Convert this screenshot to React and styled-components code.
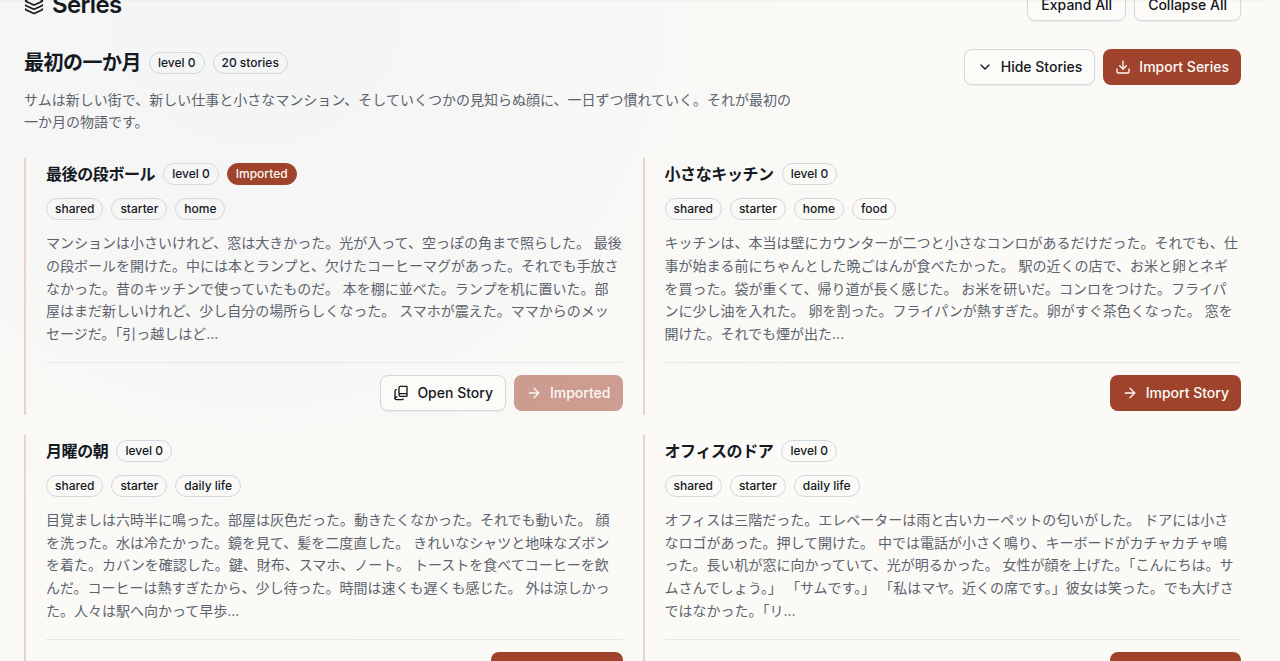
import React from "react";
import styled, { createGlobalStyle, css } from "styled-components";
import { ArrowRight, BookCopy, ChevronDown, Download, Layers } from "lucide-react";

const GlobalStyle = createGlobalStyle`
  *,
  *::before,
  *::after {
    box-sizing: border-box;
  }

  html {
    height: 100%;
    overflow: hidden;
    background: #fbfaf6;
  }

  body {
    margin: 0;
    height: 100%;
    color: #14181f;
    font-family: Inter, "Noto Sans CJK JP", sans-serif;
    font-size: 14px;
    line-height: 20px;
    background: radial-gradient(
      ellipse 52% 100% at 20% 0%,
      #f3f4f5 0%,
      #fbfaf6 100%
    ) no-repeat;
  }
`;

const TopEdge = styled.div`
  position: fixed;
  top: -1px;
  left: 0;
  right: 15px;
  height: 1px;
  box-shadow: 0 1px 2px rgba(20, 24, 31, 0.05);
`;

const Page = styled.main`
  display: flex;
  flex-direction: column;
  gap: 28px;
  margin-top: -11px;
  padding: 0 39px 24px 24px;
`;

const Bar = styled.header`
  display: flex;
  align-items: ${(props) => props.$align || "center"};
  justify-content: space-between;
  gap: 16px;
`;

const PageTitle = styled.h1`
  display: flex;
  align-items: center;
  gap: 8px;
  margin: 0;
  font-size: 24px;
  font-weight: 600;
  line-height: 32px;
  letter-spacing: -0.025em;
`;

const Actions = styled.div`
  display: flex;
  flex-shrink: 0;
  justify-content: flex-end;
  gap: 8px;
`;

const Button = styled.button`
  display: inline-flex;
  align-items: center;
  justify-content: center;
  gap: 8px;
  height: ${(props) => (props.$small ? "32px" : "36px")};
  padding: 0 ${(props) => (props.$small ? "13px" : "12px")};
  border: 0;
  border-radius: 8px;
  font: inherit;
  font-weight: 500;
  white-space: nowrap;
  cursor: pointer;
  color: #fbfaf6;
  background: #a0432d;

  &:disabled {
    opacity: 0.5;
    cursor: default;
  }

  ${(props) =>
    props.$outline &&
    css`
      color: #14181f;
      background: #fcfbf8;
      border: 1px solid #d3d7de;
      box-shadow: 0 1px 2px rgba(20, 24, 31, 0.06);
    `}
`;

const Series = styled.section`
  display: flex;
  flex-direction: column;
  gap: 25px;
`;

const SeriesInfo = styled.div`
  display: flex;
  flex-direction: column;
  gap: 12px;
  max-width: 768px;
`;

const Row = styled.div`
  display: flex;
  flex-wrap: wrap;
  align-items: center;
  gap: 8px;
`;

const SeriesTitle = styled.h2`
  margin: 0;
  font-size: 20px;
  font-weight: 600;
  line-height: 28px;
  letter-spacing: -0.025em;
`;

const StoryTitle = styled.h3`
  margin: 0;
  font-size: 16px;
  font-weight: 600;
  line-height: 24px;
  letter-spacing: -0.025em;
`;

const Badge = styled.span`
  display: inline-flex;
  align-items: center;
  height: 22px;
  padding: 0 8px;
  border: 1px solid ${(props) => (props.$filled ? "#a0432d" : "#d3d7de")};
  border-radius: 11px;
  color: ${(props) => (props.$filled ? "#fbfaf6" : "#14181f")};
  background: ${(props) => (props.$filled ? "#a0432d" : "transparent")};
  font-size: 12px;
  font-weight: 500;
  line-height: 16px;
`;

const SeriesText = styled.p`
  margin: 0;
  color: #5c636e;
  line-height: 22px;
`;

const StoryText = styled(SeriesText)`
  line-height: 1.625;
  white-space: pre-line;
`;

const StoryGrid = styled.div`
  display: grid;
  grid-template-columns: repeat(2, minmax(0, 1fr));
  gap: 20px;
`;

const Story = styled.article`
  display: flex;
  flex-direction: column;
  gap: 12px;
  padding: 4px 0 4px 20px;
  border-left: 2px solid #e8d2cc;
`;

const StoryFooter = styled.footer`
  display: flex;
  justify-content: flex-end;
  gap: 8px;
  margin-top: 4px;
  padding-top: 12px;
  border-top: 1px solid #e5e7e9;
`;

const stories = [
  {
    title: "最後の段ボール",
    tags: ["shared", "starter", "home"],
    imported: true,
    text: "マンションは小さいけれど、窓は大きかった。光が入って、空っぽの角まで照らした。 最後の段ボールを開けた。中には本とランプと、欠けたコーヒーマグがあった。それでも手放さなかった。昔のキッチンで使っていたものだ。 本を棚に並べた。ランプを机に置いた。部\n屋はまだ新しいけれど、少し自分の場所らしくなった。 スマホが震えた。ママからのメッ\nセージだ。「引っ越しはど...",
  },
  {
    title: "小さなキッチン",
    tags: ["shared", "starter", "home", "food"],
    text: "キッチンは、本当は壁にカウンターが二つと小さなコンロがあるだけだった。それでも、仕事が始まる前にちゃんとした晩ごはんが食べたかった。 駅の近くの店で、お米と卵とネギを買った。袋が重くて、帰り道が長く感じた。 お米を研いだ。コンロをつけた。フライパンに少し油を入れた。 卵を割った。フライパンが熱すぎた。卵がすぐ茶色くなった。 窓を開けた。それでも煙が出た...",
  },
  {
    title: "月曜の朝",
    tags: ["shared", "starter", "daily life"],
    text: "目覚ましは六時半に鳴った。部屋は灰色だった。動きたくなかった。それでも動いた。 顔を洗った。水は冷たかった。鏡を見て、髪を二度直した。 きれいなシャツと地味なズボンを着た。カバンを確認した。鍵、財布、スマホ、ノート。 トーストを食べてコーヒーを飲んだ。コーヒーは熱すぎたから、少し待った。時間は速くも遅くも感じた。 外は涼しかった。人々は駅へ向かって早歩...",
  },
  {
    title: "オフィスのドア",
    tags: ["shared", "starter", "daily life"],
    text: "オフィスは三階だった。エレベーターは雨と古いカーペットの匂いがした。 ドアには小さなロゴがあった。押して開けた。 中では電話が小さく鳴り、キーボードがカチャカチャ鳴った。長い机が窓に向かっていて、光が明るかった。 女性が顔を上げた。「こんにちは。サムさんでしょう。」 「サムです。」 「私はマヤ。近くの席です。」彼女は笑った。でも大げさではなかった。「リ...",
  },
];

function StoryCard({ story }) {
  return (
    <Story>
      <Row>
        <StoryTitle>{story.title}</StoryTitle>
        <Badge>level 0</Badge>
        {story.imported && <Badge $filled>Imported</Badge>}
      </Row>
      <Row>
        {story.tags.map((tag) => (
          <Badge key={tag}>{tag}</Badge>
        ))}
      </Row>
      <StoryText>{story.text}</StoryText>
      <StoryFooter>
        {story.imported && (
          <Button $outline>
            <BookCopy size={16} />
            Open Story
          </Button>
        )}
        <Button disabled={story.imported}>
          <ArrowRight size={16} />
          {story.imported ? "Imported" : "Import Story"}
        </Button>
      </StoryFooter>
    </Story>
  );
}

function App() {
  return (
    <>
      <GlobalStyle />
      <TopEdge />
      <Page>
        <Bar>
          <PageTitle>
            <Layers size={20} />
            Series
          </PageTitle>
          <Actions>
            <Button $outline $small>
              Expand All
            </Button>
            <Button $outline $small>
              Collapse All
            </Button>
          </Actions>
        </Bar>
        <Series>
          <Bar $align="flex-start">
            <SeriesInfo>
              <Row>
                <SeriesTitle>最初の一か月</SeriesTitle>
                <Badge>level 0</Badge>
                <Badge>20 stories</Badge>
              </Row>
              <SeriesText>
                サムは新しい街で、新しい仕事と小さなマンション、そしていくつかの見知らぬ顔に、一日ずつ慣れていく。それが最初の一か月の物語です。
              </SeriesText>
            </SeriesInfo>
            <Actions>
              <Button $outline>
                <ChevronDown size={16} />
                Hide Stories
              </Button>
              <Button>
                <Download size={16} />
                Import Series
              </Button>
            </Actions>
          </Bar>
          <StoryGrid>
            {stories.map((story) => (
              <StoryCard key={story.title} story={story} />
            ))}
          </StoryGrid>
        </Series>
      </Page>
    </>
  );
}

export default App;
